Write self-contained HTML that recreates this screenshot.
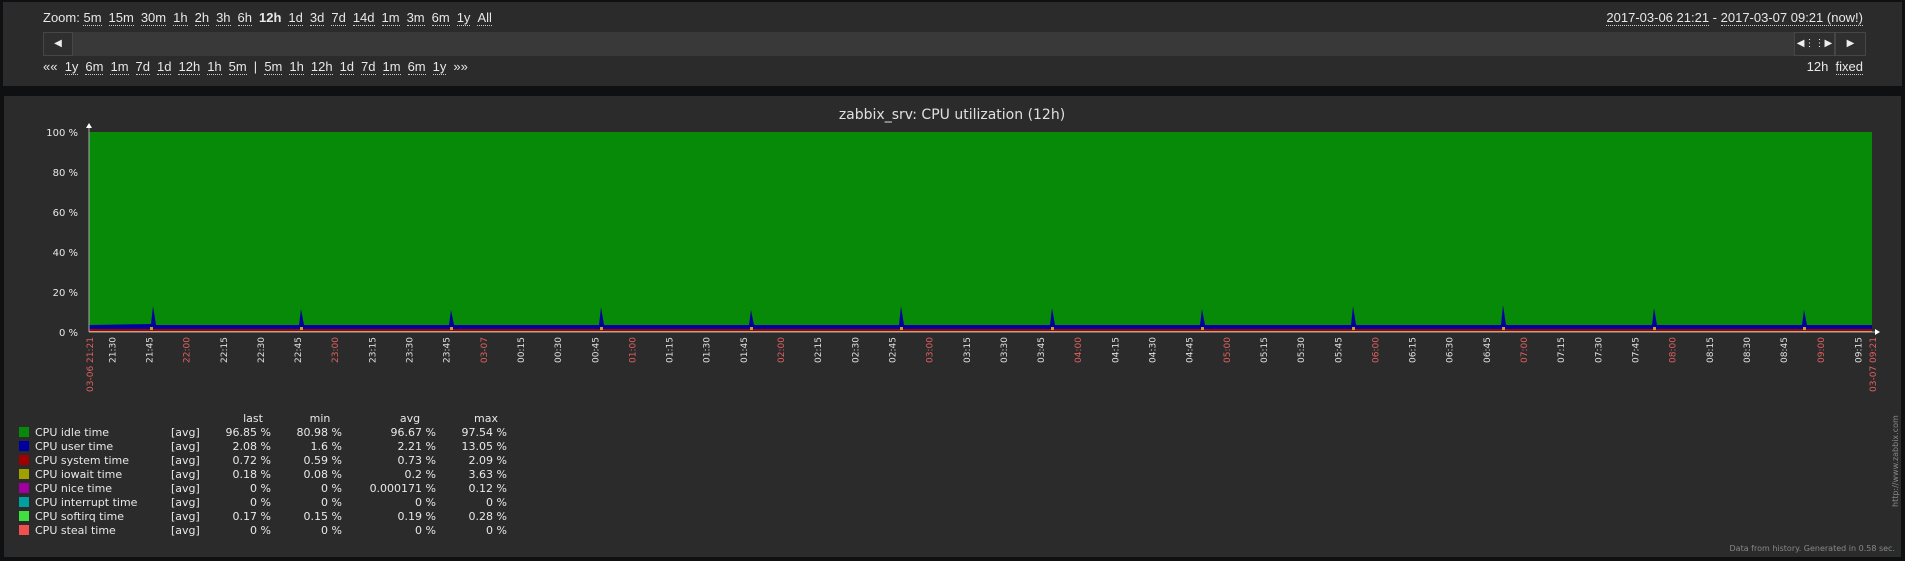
<!DOCTYPE html>
<html><head><meta charset="utf-8"><style>
html,body{margin:0;padding:0;background:#0f1012;width:1905px;height:561px;overflow:hidden;font-family:"Liberation Sans",Arial,sans-serif;}
.top{position:absolute;left:3px;top:2px;width:1899px;height:84px;background:#2b2b2b;}
.bar{position:absolute;left:43px;top:32px;width:1822px;height:24px;background:#393939;}
.btn{position:absolute;top:32px;height:22px;background:#2f2f2f;border:1px solid #464646;color:#eee;font-size:10px;text-align:center;line-height:22px;}
.nav{position:absolute;font-size:13px;color:#e8e8e8;white-space:nowrap;}
.nav a{color:#e8e8e8;text-decoration:none;border-bottom:1px dotted #ccc;margin-right:7px;}
.nav b{font-weight:bold;margin-right:7px;}
.gp{position:absolute;left:4px;top:96px;width:1897px;height:461px;background:#2b2b2b;}
</style></head><body>
<div class="top"></div>
<div class="bar"></div>
<div class="btn" style="left:43px;width:28px;">&#9664;</div>
<div class="btn" style="left:1794px;width:39px;">&#9664;&#8942;&#8942;&#9654;</div>
<div class="btn" style="left:1835px;width:29px;">&#9654;</div>
<div class="nav" style="left:43px;top:10px;">Zoom: <a>5m</a><a>15m</a><a>30m</a><a>1h</a><a>2h</a><a>3h</a><a>6h</a><b>12h</b><a>1d</a><a>3d</a><a>7d</a><a>14d</a><a>1m</a><a>3m</a><a>6m</a><a>1y</a><a>All</a></div>
<div class="nav" style="left:43px;top:59px;">«« &nbsp;<a>1y</a><a>6m</a><a>1m</a><a>7d</a><a>1d</a><a>12h</a><a>1h</a><a>5m</a>| &nbsp;<a>5m</a><a>1h</a><a>12h</a><a>1d</a><a>7d</a><a>1m</a><a>6m</a><a>1y</a>»»</div>
<div class="nav" style="right:42px;top:10px;"><a style="margin:0">2017-03-06 21:21</a> - <a style="margin:0">2017-03-07 09:21 (now!)</a></div>
<div class="nav" style="right:42px;top:59px;">12h &nbsp;<a style="margin:0">fixed</a></div>
<div class="gp"></div>
<svg style="position:absolute;left:0;top:0" width="1905" height="561" font-family="DejaVu Sans, sans-serif">
<text x="952" y="119" fill="#e0e0e0" font-size="14" text-anchor="middle">zabbix_srv: CPU utilization (12h)</text>
<g fill="#e8e8e8" font-size="10" text-anchor="end">
<text x="78" y="136">100 %</text><text x="78" y="176">80 %</text><text x="78" y="216">60 %</text><text x="78" y="256">40 %</text><text x="78" y="296">20 %</text><text x="78" y="336">0 %</text></g>
<rect x="89" y="132" width="1783" height="200" fill="#078a07"/>
<path d="M89 325 L151 324 L153 306 L156 325 L299 325 L301 309 L304 325 L449 325 L451 310 L454 325 L599 325 L601 307 L604 325 L749 325 L751 310 L754 325 L899 325 L901 306 L904 325 L1050 325 L1052 308 L1055 325 L1200 325 L1202 309 L1205 325 L1351 325 L1353 306 L1356 325 L1501 325 L1503 305 L1506 325 L1652 325 L1654 308 L1657 325 L1802 325 L1804 310 L1807 325 L1872 325 L1872 332 L89 332 Z" fill="#0000a0"/>
<rect x="89" y="329" width="1783" height="2" fill="#a00000"/>
<rect x="89" y="331" width="1783" height="1" fill="#c8b040"/>
<g fill="#c8a020"><rect x="150" y="327" width="3" height="3"/><rect x="300" y="327" width="3" height="3"/><rect x="450" y="327" width="3" height="3"/><rect x="600" y="327" width="3" height="3"/><rect x="750" y="327" width="3" height="3"/><rect x="900" y="327" width="3" height="3"/><rect x="1051" y="327" width="3" height="3"/><rect x="1201" y="327" width="3" height="3"/><rect x="1352" y="327" width="3" height="3"/><rect x="1502" y="327" width="3" height="3"/><rect x="1653" y="327" width="3" height="3"/><rect x="1803" y="327" width="3" height="3"/></g>
<line x1="89" y1="126" x2="89" y2="332" stroke="#aaa"/><line x1="89" y1="332" x2="1877" y2="332" stroke="#aaa"/>
<polygon points="86,128 92,128 89,123" fill="#fff"/><polygon points="1875,329 1875,335 1880,332" fill="#fff"/>
<g font-size="9" fill="#e0e0e0" text-anchor="end">
<text transform="translate(93,337) rotate(-90)" fill="#e06060">03-06 21:21</text>
<text transform="translate(1876,337) rotate(-90)" fill="#e06060">03-07 09:21</text>
<text transform="translate(115.3,337) rotate(-90)">21:30</text>
<text transform="translate(152.5,337) rotate(-90)">21:45</text>
<text transform="translate(189.6,337) rotate(-90)" fill="#e06060">22:00</text>
<text transform="translate(226.8,337) rotate(-90)">22:15</text>
<text transform="translate(263.9,337) rotate(-90)">22:30</text>
<text transform="translate(301.1,337) rotate(-90)">22:45</text>
<text transform="translate(338.2,337) rotate(-90)" fill="#e06060">23:00</text>
<text transform="translate(375.4,337) rotate(-90)">23:15</text>
<text transform="translate(412.5,337) rotate(-90)">23:30</text>
<text transform="translate(449.7,337) rotate(-90)">23:45</text>
<text transform="translate(486.8,337) rotate(-90)" fill="#e06060">03-07</text>
<text transform="translate(524.0,337) rotate(-90)">00:15</text>
<text transform="translate(561.1,337) rotate(-90)">00:30</text>
<text transform="translate(598.3,337) rotate(-90)">00:45</text>
<text transform="translate(635.4,337) rotate(-90)" fill="#e06060">01:00</text>
<text transform="translate(672.6,337) rotate(-90)">01:15</text>
<text transform="translate(709.7,337) rotate(-90)">01:30</text>
<text transform="translate(746.9,337) rotate(-90)">01:45</text>
<text transform="translate(784.0,337) rotate(-90)" fill="#e06060">02:00</text>
<text transform="translate(821.2,337) rotate(-90)">02:15</text>
<text transform="translate(858.3,337) rotate(-90)">02:30</text>
<text transform="translate(895.5,337) rotate(-90)">02:45</text>
<text transform="translate(932.6,337) rotate(-90)" fill="#e06060">03:00</text>
<text transform="translate(969.8,337) rotate(-90)">03:15</text>
<text transform="translate(1006.9,337) rotate(-90)">03:30</text>
<text transform="translate(1044.1,337) rotate(-90)">03:45</text>
<text transform="translate(1081.2,337) rotate(-90)" fill="#e06060">04:00</text>
<text transform="translate(1118.4,337) rotate(-90)">04:15</text>
<text transform="translate(1155.5,337) rotate(-90)">04:30</text>
<text transform="translate(1192.7,337) rotate(-90)">04:45</text>
<text transform="translate(1229.8,337) rotate(-90)" fill="#e06060">05:00</text>
<text transform="translate(1267.0,337) rotate(-90)">05:15</text>
<text transform="translate(1304.1,337) rotate(-90)">05:30</text>
<text transform="translate(1341.3,337) rotate(-90)">05:45</text>
<text transform="translate(1378.4,337) rotate(-90)" fill="#e06060">06:00</text>
<text transform="translate(1415.6,337) rotate(-90)">06:15</text>
<text transform="translate(1452.7,337) rotate(-90)">06:30</text>
<text transform="translate(1489.9,337) rotate(-90)">06:45</text>
<text transform="translate(1527.0,337) rotate(-90)" fill="#e06060">07:00</text>
<text transform="translate(1564.2,337) rotate(-90)">07:15</text>
<text transform="translate(1601.3,337) rotate(-90)">07:30</text>
<text transform="translate(1638.5,337) rotate(-90)">07:45</text>
<text transform="translate(1675.6,337) rotate(-90)" fill="#e06060">08:00</text>
<text transform="translate(1712.8,337) rotate(-90)">08:15</text>
<text transform="translate(1749.9,337) rotate(-90)">08:30</text>
<text transform="translate(1787.1,337) rotate(-90)">08:45</text>
<text transform="translate(1824.2,337) rotate(-90)" fill="#e06060">09:00</text>
<text transform="translate(1861.4,337) rotate(-90)">09:15</text>
</g>
<text transform="translate(1898,507) rotate(-90)" font-size="8" fill="#888">http://www.zabbix.com</text>
<text x="1895" y="551" font-size="8" fill="#888" text-anchor="end">Data from history. Generated in 0.58 sec.</text>
<g font-size="11" fill="#e8e8e8">
<text x="253" y="422" text-anchor="middle">last</text><text x="320" y="422" text-anchor="middle">min</text><text x="410" y="422" text-anchor="middle">avg</text><text x="486" y="422" text-anchor="middle">max</text>
<rect x="19" y="427" width="10" height="10" fill="#078a07"/><rect x="19" y="441" width="10" height="10" fill="#0000a0"/><rect x="19" y="455" width="10" height="10" fill="#a00000"/><rect x="19" y="469" width="10" height="10" fill="#a0a000"/><rect x="19" y="483" width="10" height="10" fill="#a000a0"/><rect x="19" y="497" width="10" height="10" fill="#00a0a0"/><rect x="19" y="511" width="10" height="10" fill="#40e040"/><rect x="19" y="525" width="10" height="10" fill="#f05050"/>
<g><text x="35" y="436">CPU idle time</text><text x="35" y="450">CPU user time</text><text x="35" y="464">CPU system time</text><text x="35" y="478">CPU iowait time</text><text x="35" y="492">CPU nice time</text><text x="35" y="506">CPU interrupt time</text><text x="35" y="520">CPU softirq time</text><text x="35" y="534">CPU steal time</text></g>
<g><text x="171" y="436">[avg]</text><text x="171" y="450">[avg]</text><text x="171" y="464">[avg]</text><text x="171" y="478">[avg]</text><text x="171" y="492">[avg]</text><text x="171" y="506">[avg]</text><text x="171" y="520">[avg]</text><text x="171" y="534">[avg]</text></g>
<g text-anchor="end"><text x="271" y="436">96.85 %</text><text x="271" y="450">2.08 %</text><text x="271" y="464">0.72 %</text><text x="271" y="478">0.18 %</text><text x="271" y="492">0 %</text><text x="271" y="506">0 %</text><text x="271" y="520">0.17 %</text><text x="271" y="534">0 %</text></g>
<g text-anchor="end"><text x="342" y="436">80.98 %</text><text x="342" y="450">1.6 %</text><text x="342" y="464">0.59 %</text><text x="342" y="478">0.08 %</text><text x="342" y="492">0 %</text><text x="342" y="506">0 %</text><text x="342" y="520">0.15 %</text><text x="342" y="534">0 %</text></g>
<g text-anchor="end"><text x="436" y="436">96.67 %</text><text x="436" y="450">2.21 %</text><text x="436" y="464">0.73 %</text><text x="436" y="478">0.2 %</text><text x="436" y="492">0.000171 %</text><text x="436" y="506">0 %</text><text x="436" y="520">0.19 %</text><text x="436" y="534">0 %</text></g>
<g text-anchor="end"><text x="507" y="436">97.54 %</text><text x="507" y="450">13.05 %</text><text x="507" y="464">2.09 %</text><text x="507" y="478">3.63 %</text><text x="507" y="492">0.12 %</text><text x="507" y="506">0 %</text><text x="507" y="520">0.28 %</text><text x="507" y="534">0 %</text></g>
</g>
</svg>
</body></html>
